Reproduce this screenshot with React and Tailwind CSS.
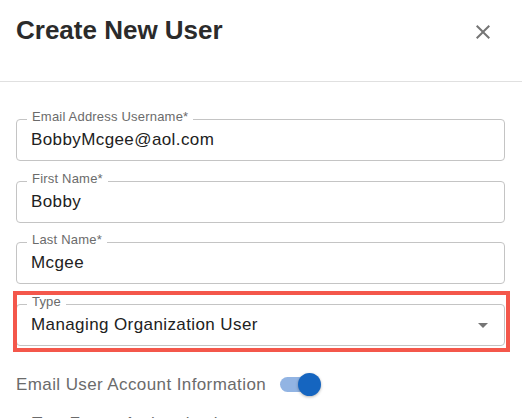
import { useState } from "react";

const Field = ({ label, value, select }) => {
  return (
    <div className="relative h-[42px] rounded-[4px] border border-[#c4c4c4] flex items-center pl-[14px] pr-[9px]">
      <span className="absolute -top-[11px] left-[10px] px-[5px] bg-white text-[13px] leading-[16px] text-[#6b6b6b] tracking-[0.2px]">
        {label}
      </span>
      <span className="flex-1 text-[17px] leading-[24px] tracking-[0.4px] text-[#212121]">
        {value}
      </span>
      {select && (
        <svg viewBox="0 0 24 24" className="w-6 h-6 fill-[#757575]">
          <path d="M7 10l5 5 5-5z" />
        </svg>
      )}
    </div>
  );
};

const App = () => {
  const [sendEmail, setSendEmail] = useState(true);

  return (
    <div className="w-[522px] h-[418px] overflow-hidden bg-white font-['Liberation_Sans',Arial,sans-serif]">
      <div className="h-[82px] flex items-start justify-between border-b border-[#e0e0e0]">
        <h1 className="ml-4 mt-[17px] text-[26px] leading-[26px] font-bold text-[#2b2b2b]">
          Create New User
        </h1>
        <button className="mr-[19px] mt-[12px] w-10 h-10 flex items-center justify-center">
          <svg viewBox="0 0 24 24" className="w-6 h-6 fill-[#757575]">
            <path d="M19 6.41 17.59 5 12 10.59 6.41 5 5 6.41 10.59 12 5 17.59 6.41 19 12 13.41 17.59 19 19 17.59 13.41 12z" />
          </svg>
        </button>
      </div>

      <div className="pt-[37px] pl-4 pr-[17px] flex flex-col gap-[19.5px]">
        <Field label="Email Address Username*" value="BobbyMcgee@aol.com" />
        <Field label="First Name*" value="Bobby" />
        <Field label="Last Name*" value="Mcgee" />
        <div className="relative">
          <Field label="Type" value="Managing Organization User" select />
          <div className="absolute -left-[3px] -right-[5px] -top-[13px] -bottom-[6px] border-[4px] border-[#f4574b] pointer-events-none"></div>
        </div>
      </div>

      <div className="mt-[20px] h-[38px] pl-4 flex items-center">
        <span className="text-[17px] leading-[24px] tracking-[0.4px] text-[#6b6b6b]">
          Email User Account Information
        </span>
        <button
          onClick={() => setSendEmail(!sendEmail)}
          className={
            sendEmail
              ? "relative ml-[14px] w-[37px] h-[15px] rounded-full bg-[#92b4e3]"
              : "relative ml-[14px] w-[37px] h-[15px] rounded-full bg-[#bdbdbd]"
          }
        >
          <span
            className={
              sendEmail
                ? "absolute -top-[4px] -right-[4px] w-[23px] h-[23px] rounded-full bg-[#1565c0] shadow-[0_1px_3px_rgba(0,0,0,0.3)]"
                : "absolute -top-[4px] -left-[4px] w-[23px] h-[23px] rounded-full bg-[#fafafa] shadow-[0_1px_3px_rgba(0,0,0,0.3)]"
            }
          ></span>
        </button>
      </div>

      <div className="mt-[8px] pl-8 text-[17px] leading-[24px] tracking-[0.4px] text-[#6b6b6b]">
        Two Factor Authentication
      </div>
    </div>
  );
};

export default App;
